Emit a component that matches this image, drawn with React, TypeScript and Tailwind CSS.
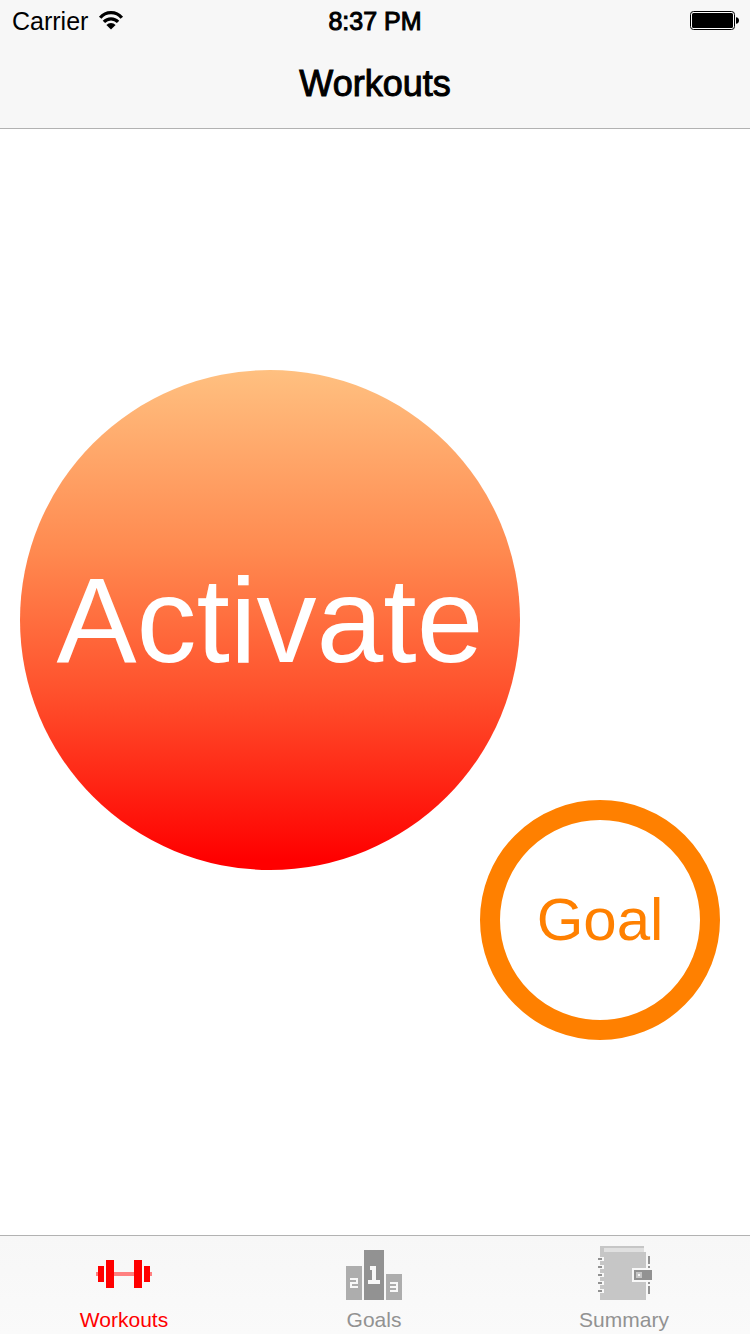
import React from "react";

function WifiIcon() {
  return (
    <svg width="26" height="20" viewBox="-1 0 26 20" aria-hidden="true">
      <g fill="none" stroke="#000" strokeWidth="3.3">
        <path d="M1.2 6.7A14.2 14.2 0 0 1 22.8 6.7" />
        <path d="M4.9 10.9A9.9 9.9 0 0 1 19.1 10.9" />
      </g>
      <path d="M12 18.4L7.4 14A6.4 6.4 0 0 1 16.6 14Z" fill="#000" />
    </svg>
  );
}

function BatteryIcon() {
  return (
    <svg width="49" height="20" viewBox="0 0 49 20" aria-hidden="true">
      <rect x="0.5" y="0.5" width="44" height="18" rx="3" fill="#fff" stroke="#000" />
      <rect x="2" y="2" width="41" height="15" rx="1.5" fill="#000" />
      <path d="M46 6.2Q49 6.4 49 9.5T46 12.8Z" fill="#000" />
    </svg>
  );
}

function DumbbellIcon() {
  return (
    <svg width="60" height="60" viewBox="0 0 60 60" shapeRendering="crispEdges" aria-hidden="true">
      <g fill="#ff8080">
        <rect x="2" y="28" width="2" height="4" />
        <rect x="20" y="28" width="20" height="4" />
        <rect x="56" y="28" width="2" height="4" />
      </g>
      <g fill="#f00">
        <rect x="4" y="22" width="6" height="16" />
        <rect x="12" y="16" width="8" height="28" />
        <rect x="40" y="16" width="8" height="28" />
        <rect x="50" y="22" width="6" height="16" />
      </g>
    </svg>
  );
}

function PodiumIcon() {
  return (
    <svg width="60" height="60" viewBox="0 0 60 60" shapeRendering="crispEdges" aria-hidden="true">
      <rect x="2" y="22" width="16" height="34" fill="#adadad" />
      <rect x="20" y="6" width="20" height="50" fill="#929292" />
      <rect x="42" y="30" width="16" height="26" fill="#adadad" />
      <g fill="#f8f8f8">
        <path d="M26 22h6v14h4v4H24v-4h4V26h-2z" />
        <path d="M6 34h8v6H8v2h6v2H6v-6h6v-2H6z" />
        <path d="M46 38h8v10h-8v-2h6v-2h-6v-2h6v-2h-6z" />
      </g>
    </svg>
  );
}

function NotebookIcon() {
  return (
    <svg width="60" height="60" viewBox="0 0 60 60" shapeRendering="crispEdges" aria-hidden="true">
      <path d="M6 2h44v6h2v48H6z" fill="#c6c6c6" />
      <path d="M10 4h40v4H10z" fill="#e0e0e0" />
      <g fill="#f8f8f8">
        <path d="M4 13h6v4H4zM4 21h6v4H4zM4 29h6v4H4zM4 37h6v4H4zM4 45h6v4H4z" />
        <rect x="38" y="24" width="14" height="14" />
      </g>
      <g fill="#929292">
        <path d="M4 14h4v2H4zM4 22h4v2H4zM4 30h4v2H4zM4 38h4v2H4zM4 46h4v2H4z" />
        <path d="M54 12h2v8h-2zM54 22h2v2h-2zM54 38h2v2h-2zM54 42h2v8h-2z" />
        <rect x="40" y="26" width="18" height="10" />
      </g>
      <path d="M42 28h6v6h-6z" fill="#c6c6c6" />
      <path d="M44 30h2v2h-2z" fill="#f8f8f8" />
    </svg>
  );
}

const tabs = [
  { label: "Workouts", Icon: DumbbellIcon, active: true },
  { label: "Goals", Icon: PodiumIcon, active: false },
  { label: "Summary", Icon: NotebookIcon, active: false },
];

export default function App() {
  return (
    <div className="flex min-h-screen flex-col bg-white font-['Liberation_Sans',Arial,sans-serif] text-black">
      <header className="border-b border-[#b2b2b2] bg-[#f7f7f7]">
        <div className="grid h-10 grid-cols-[1fr_auto_1fr] items-center px-3 pt-0.5 text-[25px] leading-9">
          <div className="flex items-center gap-2.5">
            <span>Carrier</span>
            <WifiIcon />
          </div>
          <time className="[-webkit-text-stroke:1px_#000]">8:37 PM</time>
          <div className="-mr-px flex justify-end">
            <BatteryIcon />
          </div>
        </div>
        <h1 className="h-22 text-center text-[36px] leading-[88px] [-webkit-text-stroke:1px_#000]">Workouts</h1>
      </header>

      <main className="flex flex-1 flex-col pt-[241px] pr-[30px] pl-5">
        <button
          type="button"
          className="size-[500px] rounded-full bg-[linear-gradient(to_bottom,#ffc080_0%,#ff8a50_36%,#ff522d_64%,#ff0000_98%)] text-[120px] leading-none text-white"
        >
          Activate
        </button>
        <button
          type="button"
          className="-mt-[70px] size-60 self-end rounded-full border-20 border-[#ff8000] bg-white text-[60px] leading-none text-[#ff8000]"
        >
          Goal
        </button>
      </main>

      <nav className="grid grid-cols-3 border-t border-[#b2b2b2] bg-linear-to-b from-[#f7f7f7] to-[#fafafa]">
        {tabs.map(({ label, Icon, active }) => (
          <a
            key={label}
            href={"#" + label.toLowerCase()}
            aria-current={active ? "page" : undefined}
            className={
              "flex flex-col items-center gap-0.5 pt-2 pr-0.5 text-[21px] leading-7 " +
              (active ? "text-[#ff0000]" : "text-[#929292]")
            }
          >
            <Icon />
            {label}
          </a>
        ))}
      </nav>
    </div>
  );
}
